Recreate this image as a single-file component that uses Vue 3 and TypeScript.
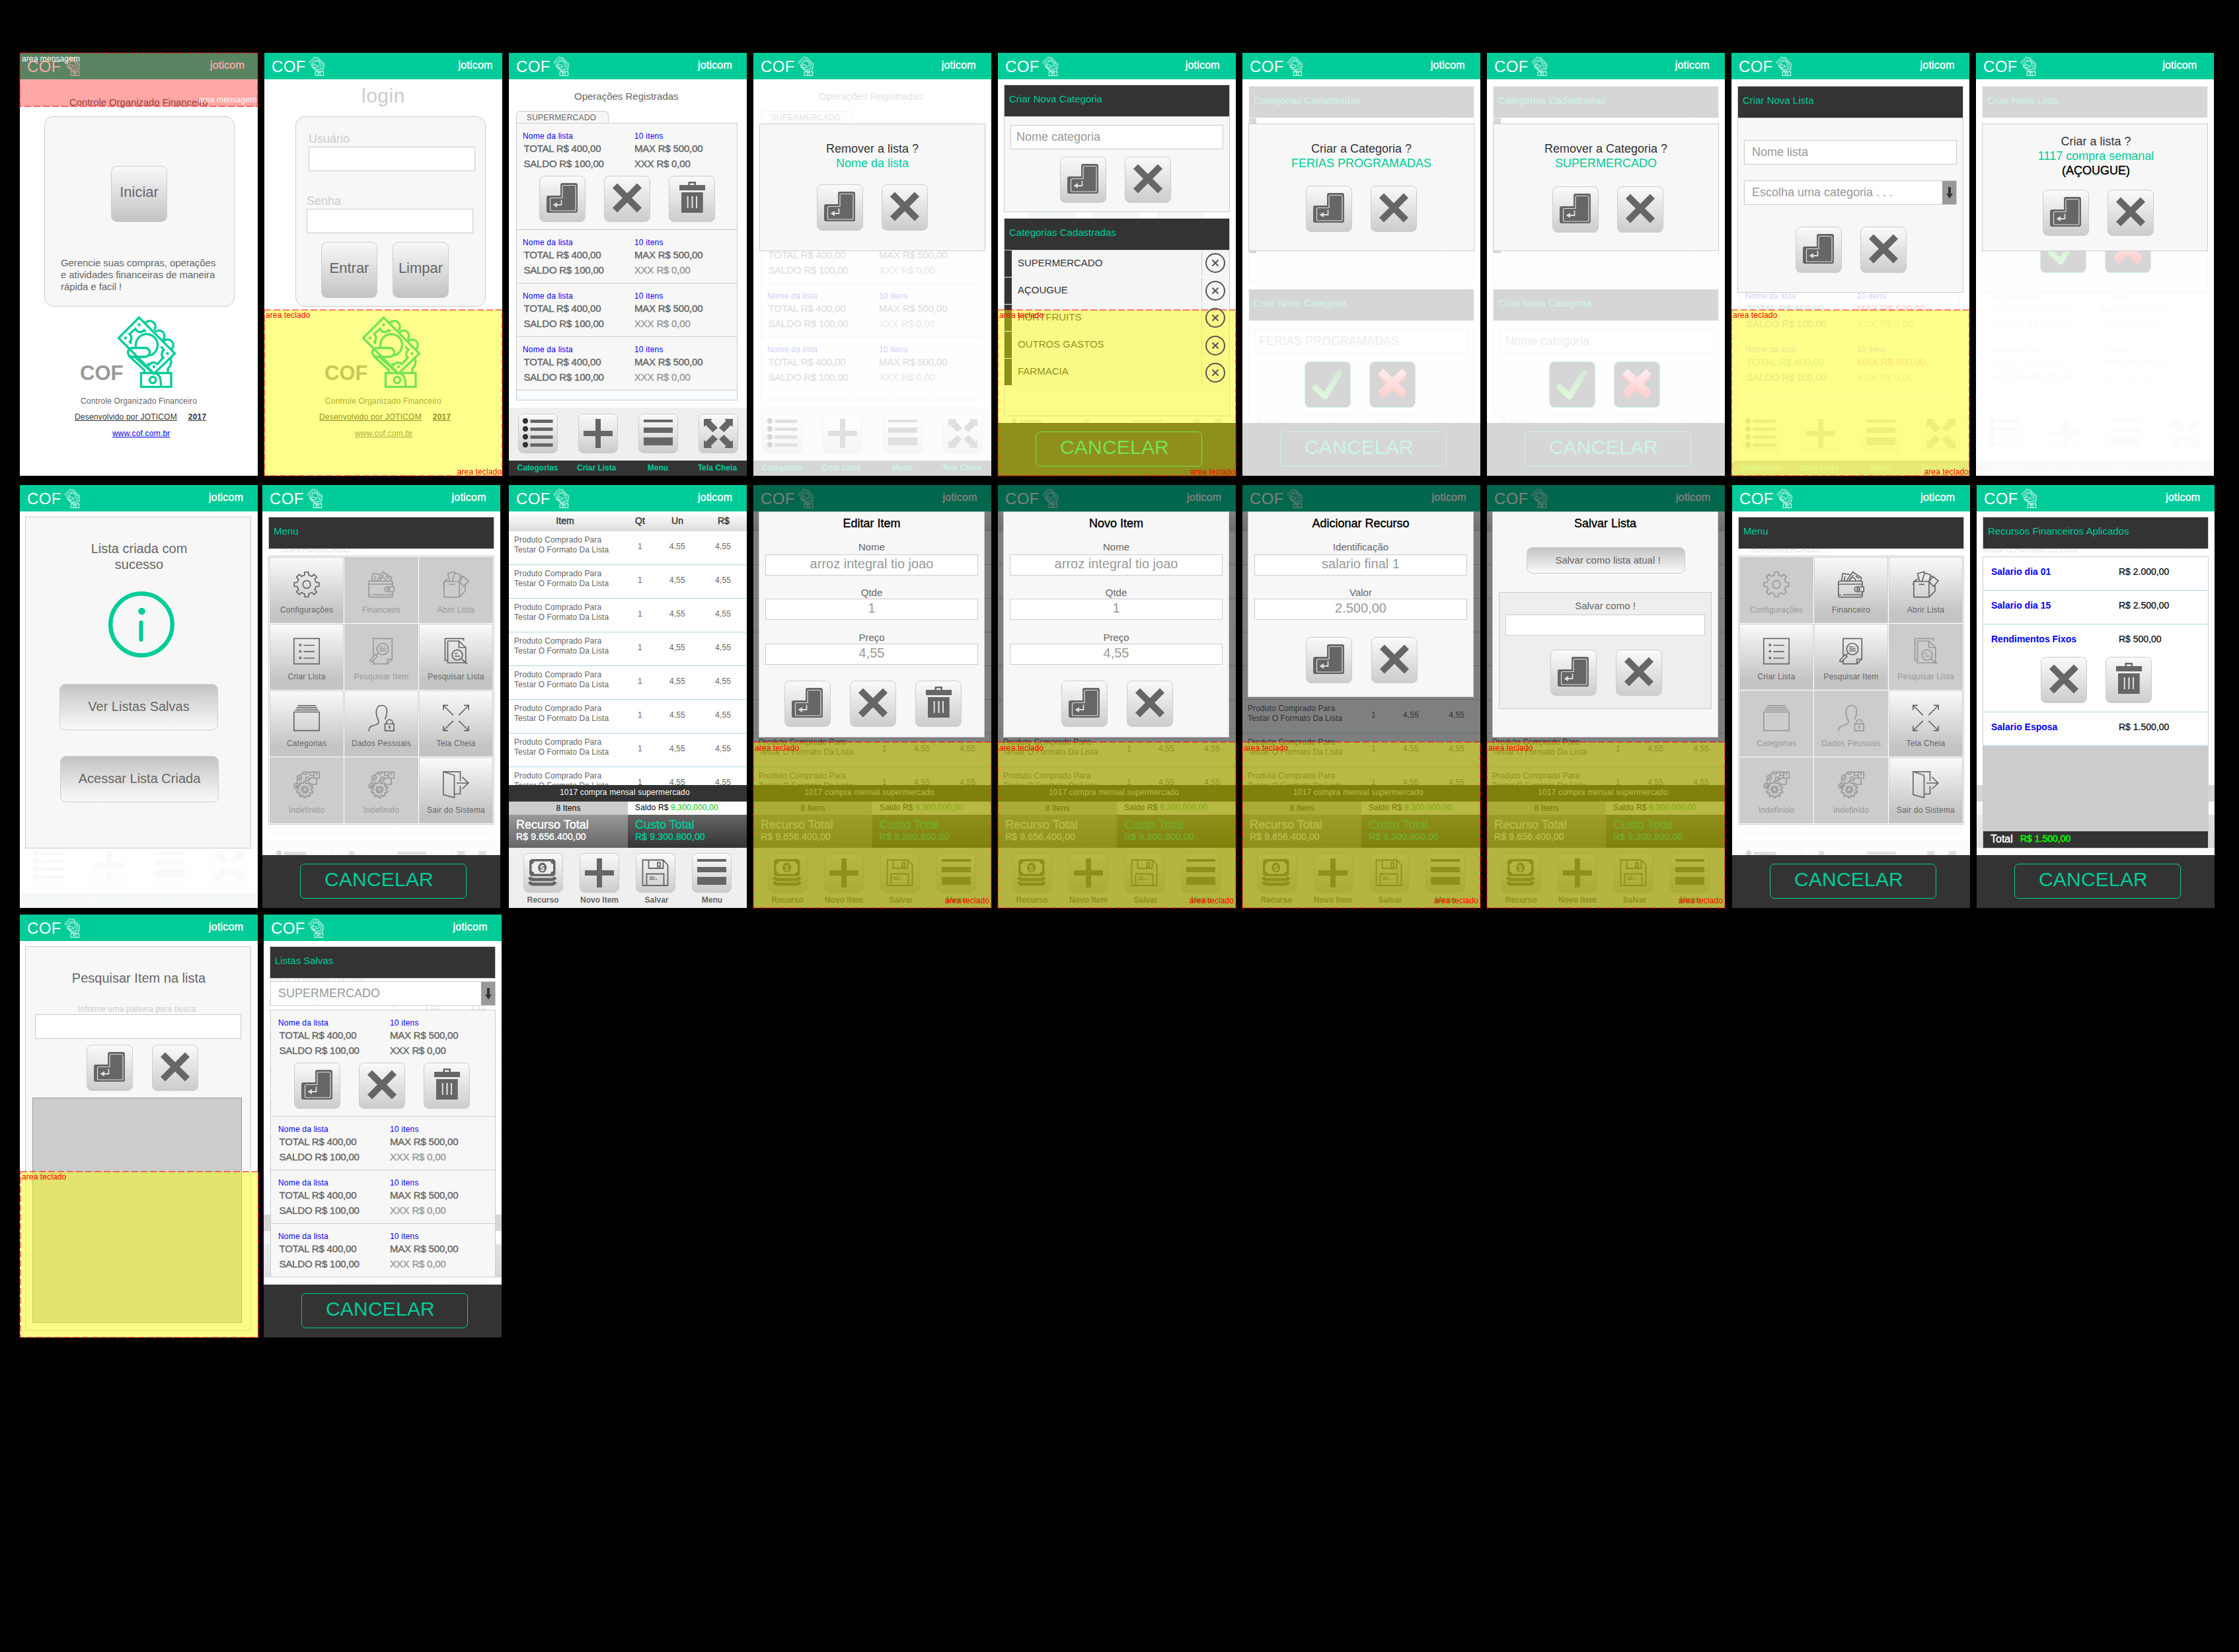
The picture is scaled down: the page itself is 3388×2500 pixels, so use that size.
<script setup lang="ts">
type Screen = {
  kind: string
  brand: number
  nudge?: number
  base?: 'ops' | 'items'
  old?: boolean
  veil?: 'v80' | 'v90' | 'v95' | 'dark'
  keys?: 'row1' | 'row2' | 'row3'
  title?: string
  fields?: { label: string; value: string }[]
  icons?: string[]
  ask?: { lines: { text: string; cls: string }[]; left: number; top: number }
  typed?: string
  cancel?: boolean
  on?: string[]
}

const rows: Screen[][] = [
  [
    { kind: 'intro', brand: 339 },
    { kind: 'login', brand: 344.6, keys: 'row1' },
    { kind: 'plain', brand: 337, base: 'ops' },
    {
      kind: 'ask', brand: 335.8, base: 'ops', veil: 'v80',
      ask: { left: 96, top: 199, lines: [{ text: 'Remover a lista ?', cls: '' }, { text: 'Nome da lista', cls: 'green' }] },
    },
    { kind: 'categories', brand: 334.8, base: 'ops', old: true, veil: 'v90', keys: 'row1', cancel: true },
    {
      kind: 'catAsk', brand: 335.8, base: 'ops', old: true, veil: 'v90', cancel: true, typed: 'FERIAS PROGRAMADAS',
      ask: { left: 96, top: 201, lines: [{ text: 'Criar a Categoria ?', cls: '' }, { text: 'FERIAS PROGRAMADAS', cls: 'green' }] },
    },
    {
      kind: 'catAsk', brand: 335.8, base: 'ops', old: true, veil: 'v90', cancel: true, typed: 'Nome categoria',
      ask: { left: 99, top: 202, lines: [{ text: 'Remover a Categoria ?', cls: '' }, { text: 'SUPERMERCADO', cls: 'green' }] },
    },
    { kind: 'newList', brand: 336.7, base: 'ops', old: true, veil: 'v80', keys: 'row1' },
    {
      kind: 'newListAsk', brand: 333.3, base: 'ops', old: true, veil: 'v90',
      ask: {
        left: 101, top: 207,
        lines: [{ text: 'Criar a lista ?', cls: '' }, { text: '1117 compra semanal', cls: 'green' }, { text: '(AÇOUGUE)', cls: 'black' }],
      },
    },
  ],
  [
    { kind: 'created', brand: 337.2, base: 'ops', veil: 'v95' },
    {
      kind: 'menu', brand: 337.7, nudge: -3, base: 'ops', veil: 'v80', cancel: true,
      on: ['Configurações', 'Criar Lista', 'Pesquisar Lista', 'Categorias', 'Dados Pessoais', 'Tela Cheia', 'Sair do Sistema'],
    },
    { kind: 'plain', brand: 337.2, base: 'items' },
    {
      kind: 'form', brand: 337.7, base: 'items', veil: 'dark', keys: 'row2', title: 'Editar Item',
      fields: [{ label: 'Nome', value: 'arroz integral tio joao' }, { label: 'Qtde', value: '1' }, { label: 'Preço', value: '4,55' }],
      icons: ['enter', 'cross', 'trash'],
    },
    {
      kind: 'form', brand: 337.2, base: 'items', veil: 'dark', keys: 'row2', title: 'Novo Item',
      fields: [{ label: 'Nome', value: 'arroz integral tio joao' }, { label: 'Qtde', value: '1' }, { label: 'Preço', value: '4,55' }],
      icons: ['enter', 'cross'],
    },
    {
      kind: 'form', brand: 337.7, base: 'items', veil: 'dark', keys: 'row2', title: 'Adicionar Recurso',
      fields: [{ label: 'Identificação', value: 'salario final 1' }, { label: 'Valor', value: '2.500,00' }],
      icons: ['enter', 'cross'],
    },
    { kind: 'saveList', brand: 337.2, base: 'items', veil: 'dark', keys: 'row2' },
    {
      kind: 'menu', brand: 336.3, nudge: 1, base: 'ops', veil: 'v80', cancel: true,
      on: ['Financeiro', 'Abrir Lista', 'Criar Lista', 'Pesquisar Item', 'Tela Cheia', 'Sair do Sistema'],
    },
    { kind: 'funds', brand: 337.3, nudge: 1, base: 'items', veil: 'v80', cancel: true },
  ],
  [
    { kind: 'search', brand: 337.2, base: 'ops', veil: 'v95', keys: 'row3' },
    { kind: 'saved', brand: 337.7, nudge: -1, base: 'items', veil: 'v80', cancel: true },
  ],
]

const menuItems = [
  { icon: 'gear', label: 'Configurações' },
  { icon: 'wallet', label: 'Financeiro' },
  { icon: 'box', label: 'Abrir Lista' },
  { icon: 'checklist', label: 'Criar Lista' },
  { icon: 'find-item', label: 'Pesquisar Item' },
  { icon: 'find-list', label: 'Pesquisar Lista' },
  { icon: 'folders', label: 'Categorias' },
  { icon: 'person', label: 'Dados Pessoais' },
  { icon: 'expand', label: 'Tela Cheia' },
  { icon: 'engine', label: 'Indefinido' },
  { icon: 'engine', label: 'Indefinido' },
  { icon: 'door', label: 'Sair do Sistema' },
]

const opsNav = [
  { icon: 'list60', label: 'Categorias' },
  { icon: 'plus60', label: 'Criar Lista' },
  { icon: 'bars60', label: 'Menu' },
  { icon: 'full60', label: 'Tela Cheia' },
]
const itemsNav = [
  { icon: 'money60', label: 'Recurso' },
  { icon: 'plus60', label: 'Novo Item' },
  { icon: 'disk60', label: 'Salvar' },
  { icon: 'bars60', label: 'Menu' },
]
const categories = ['SUPERMERCADO', 'AÇOUGUE', 'HORTFRUITS', 'OUTROS GASTOS', 'FARMACIA']

/* Outline of a cog wheel centred on cx, cy. */
function cog(cx: number, cy: number, teeth: number, outer: number, inner: number): string {
  const step = (Math.PI * 2) / teeth
  const at = (r: number, a: number) => `${(cx + r * Math.cos(a)).toFixed(2)} ${(cy + r * Math.sin(a)).toFixed(2)}`
  const pts: string[] = []
  for (let i = 0; i < teeth; i++) {
    const a = i * step - Math.PI / 2
    pts.push(at(inner, a - step * 0.27), at(outer, a - step * 0.2), at(outer, a + step * 0.2), at(inner, a + step * 0.27))
  }
  return 'M' + pts.join('L') + 'Z'
}
</script>

<template>
  <main class="board">
    <svg class="defs" width="0" height="0" aria-hidden="true">
      <linearGradient id="gGreen" x1="0" y1="0" x2="0" y2="1">
        <stop offset="0" stop-color="#2b9a2b" /><stop offset="1" stop-color="#5fd84f" />
      </linearGradient>
      <linearGradient id="gRed" x1="0" y1="0" x2="0" y2="1">
        <stop offset="0" stop-color="#ff9a9a" /><stop offset="1" stop-color="#f22" />
      </linearGradient>
      <symbol id="logo" viewBox="0 0 90 109">
        <g fill="none" stroke="currentColor" stroke-width="3.300" stroke-linejoin="miter">
          <path d="M33.500 2.500L2.500 33.500L56 87.500L87.500 57Z" />
          <path d="M43 10.500a7.500 7.500 0 0 1 13 11.500M58 24.500a7.500 7.500 0 0 1 11.500 11.500M71 38a7.500 7.500 0 0 1 11.500 12.500" />
          <path d="M44 24L41 21.500A7.500 7.500 0 0 1 28 19.500L19 27.500A8 8 0 0 1 19.500 39.500L22 42" />
          <path d="M46 72l2.500 2.500A8 8 0 0 1 61 73L70 63.500A8 8 0 0 1 71 51.500L66.500 46.500" />
          <path d="M28.500 48.500V44a16.500 16.500 0 1 1 21 16" />
          <rect x="16.500" y="48.500" width="33" height="13.500" rx="6.700" />
          <path d="M17.500 60L41.500 82V87M27 62L56 88M81 64c3 8 -1 13 -4 16v7" />
          <rect x="36.500" y="86.500" width="45.500" height="21" />
          <circle cx="54" cy="97" r="4.800" />
          <path d="M58 87c8 2 8.500 10 8.500 20" />
        </g>
        <g fill="currentColor">
          <circle cx="33.500" cy="13.500" r="2.200" /><circle cx="13" cy="33.500" r="2.200" />
          <circle cx="76.500" cy="57" r="2.200" /><circle cx="56" cy="77" r="2.200" />
        </g>
      </symbol>
      <symbol id="enter" viewBox="0 0 70 70">
        <path fill="#666" d="M35 11H55a3 3 0 0 1 3 3V53a3 3 0 0 1-3 3H14a3 3 0 0 1-3-3V33a3 3 0 0 1 3-3H32V14a3 3 0 0 1 3-3Z" />
        <path fill="none" stroke="#ddd" stroke-width="1.200" d="M37 14.500H53a2 2 0 0 1 2 2V51a2 2 0 0 1-2 2H18.500a2 2 0 0 1-2-2V35.500a2 2 0 0 1 2-2H35V16.500a2 2 0 0 1 2-2Z" />
        <path fill="none" stroke="#ddd" stroke-width="1.800" d="M33.500 36.500V44H23" />
        <path fill="#ddd" d="M20.500 44L27 40V48Z" />
      </symbol>
      <symbol id="cross" viewBox="0 0 70 70">
        <path stroke="#666" stroke-width="10" d="M16.500 15L53.500 52M53.500 15L16.500 52" />
      </symbol>
      <symbol id="trash" viewBox="0 0 70 70">
        <path fill="#666" fill-rule="evenodd" d="M16 14H29.500V9H41V14H55V22H16ZM32 11.500V14H38.500V11.500ZM19 25H51.700V56H19ZM27.700 31V49H29.700V31ZM34.400 31V49H36.600V31ZM41 31V49H43V31Z" />
      </symbol>
      <symbol id="check" viewBox="0 0 70 70">
        <path fill="none" stroke="url(#gGreen)" stroke-width="9" stroke-linecap="round" stroke-linejoin="round" d="M16 39L31 53L53 17" />
      </symbol>
      <symbol id="redx" viewBox="0 0 70 70">
        <path stroke="#d22" stroke-width="11" d="M17 53L53 20M17 20L53 53" />
        <path stroke="url(#gRed)" stroke-width="11" d="M17 49L53 15M17 15L53 49" />
      </symbol>
      <symbol id="list60" viewBox="0 0 60 60">
        <path fill="#333" d="M6.800 11a4.200 4.200 0 1 1 8.400 0a4.200 4.200 0 1 1-8.400 0M6.800 23a4.200 4.200 0 1 1 8.400 0a4.200 4.200 0 1 1-8.400 0M6.800 35a4.200 4.200 0 1 1 8.400 0a4.200 4.200 0 1 1-8.400 0M6.800 47a4.200 4.200 0 1 1 8.400 0a4.200 4.200 0 1 1-8.400 0" />
        <path stroke="#666" stroke-width="5" d="M18.500 11.500H52.500M18.500 23.500H52.500M18.500 35.500H52.500M18.500 47.500H52.500" />
      </symbol>
      <symbol id="plus60" viewBox="0 0 60 60">
        <path fill="#666" d="M26 8H34V26H52V34H34V52H26V34H8V26H26Z" />
      </symbol>
      <symbol id="bars60" viewBox="0 0 60 60">
        <path fill="#666" d="M8 9H52V13H8ZM8 21H52V29H8ZM8 36H52V48H8Z" />
      </symbol>
      <symbol id="full60" viewBox="0 0 60 60">
        <path fill="#666" d="M8 8H20.500L18.500 11L29 21.500L21.500 28L11 17.500L8 20ZM52 8H39.500L41.500 11L31 21.500L38.500 28L49 17.500L52 20ZM8 52H20.500L18.500 49L29 38.500L21.500 32L11 42.500L8 40ZM52 52H39.500L41.500 49L31 38.500L38.500 32L49 42.500L52 40Z" />
      </symbol>
      <symbol id="money60" viewBox="0 0 60 60">
        <path fill="#666" d="M12 9H45.500L48.500 12V32L45.500 35H12L9 32V12Z" />
        <path fill="#eee" d="M16.500 12.500H41A4.500 4.500 0 0 0 45 16.500V27.500A4.500 4.500 0 0 0 41 31.500H16.500A4.500 4.500 0 0 0 12.500 27.500V16.500A4.500 4.500 0 0 0 16.500 12.500Z" />
        <ellipse cx="28.700" cy="22" rx="6.500" ry="7.500" fill="#666" />
        <text x="28.700" y="26.500" text-anchor="middle" font-size="12" font-weight="700" fill="#eee">$</text>
        <path fill="none" stroke="#666" stroke-width="5" d="M9 36.500Q11 40 15 40H42.500Q46.500 40 48.500 36.500M9 43.500Q11 47 15 47H42.500Q46.500 47 48.500 43.500" />
      </symbol>
      <symbol id="disk60" viewBox="0 0 60 60">
        <path fill="none" stroke="#666" stroke-width="1.800" d="M10.500 10.500H41.500L48.500 18V49H10.500ZM19.500 10.500V23H41.500V10.500M33 14.500H37V20.500H33ZM16.500 49V31.500H42.500V49" />
        <path stroke="#666" stroke-width="1.500" d="M20.500 36.500H28.500M20.500 39.500H28.500M30 39.500H32" />
      </symbol>
      <symbol id="gear" viewBox="0 0 40 40">
        <path class="ln" stroke-linejoin="round" :d="cog(20, 20, 8, 19, 14.5)" /><circle class="ln" cx="20" cy="20" r="5.800" />
      </symbol>
      <symbol id="wallet" viewBox="0 0 40 40">
        <path class="ln" d="M2.500 14.800H35Q37 14.800 37 17V23.500M37 31V37Q37 39.200 35 39.200H3Q.8 39.200 .8 37V16.500Q.8 14.800 3 14.800M.8 19.500H37M.8 35.500H5M8 35.500H37M29 23.500H39.300V31H29A3.700 3.700 0 0 1 29 23.500Z" />
        <circle class="ln" cx="31" cy="27.200" r="2" />
        <path class="ln" d="M5.500 14.500L7.500 3.500L18 5M9.500 14L11 7.500M13 14.500L22.500 1L35.800 10L34 14.500M17 14.500L23.500 5.500M17.500 14.500A4.500 4.500 0 0 1 27 14.500M27 7L32 11" />
      </symbol>
      <symbol id="box" viewBox="0 0 40 40">
        <path class="ln" d="M2 15.500H25V39.200H2ZM25 39.200L34 30V20M2 15.500L.8 21M2 15.500L8 11.500M25 15.500L31 8L39 14.500L31.500 23ZM11 15.500L7.500 3.500L17.500 .8L19 4M14 15.500L18.500 2.500L27.500 5.500L25 15M27 7.500L31 8M9.500 19.800H18" />
      </symbol>
      <symbol id="checklist" viewBox="0 0 40 40">
        <rect class="ln" x=".8" y=".8" width="38.400" height="38.400" />
        <path class="ln" d="M15.500 11H32M15.500 20.700H32M15.500 30.500H32" />
        <path fill="currentColor" d="M10.300 7.800l.8 1.800 1.800.2-1.300 1.200.4 1.900-1.700-1-1.700 1 .4-1.900-1.300-1.200 1.800-.2zM10.300 17.500l.8 1.800 1.800.2-1.300 1.200.4 1.900-1.700-1-1.700 1 .4-1.900-1.300-1.200 1.800-.2zM10.300 27.300l.8 1.800 1.800.2-1.300 1.200.4 1.900-1.700-1-1.700 1 .4-1.900-1.300-1.200 1.800-.2z" />
      </symbol>
      <symbol id="find-item" viewBox="0 0 40 40">
        <path class="ln" d="M8 27V.8H36.300V32L29 39.200H8V33M29 39V32H36" />
        <circle class="ln" cx="22" cy="16.700" r="8.700" />
        <path class="ln" d="M17 13.500H22.500M24 13.500H25.500M17 16.500H27M17 19.500H27M15.500 23L12.500 26M11 25L3.500 33A1.600 1.600 0 0 0 6 35.500L14 27.800Z" />
      </symbol>
      <symbol id="find-list" viewBox="0 0 40 40">
        <path class="ln" d="M31.500 4V.8H3.500V34H7M24.500 4.500H7.500V37.500H34.800V14.500ZM24.500 4.500V14.500H34.800M28 31.500L37 39.500M18 23.500H22M18 27.500H26" />
        <circle class="ln" cx="22" cy="25.700" r="7.800" />
      </symbol>
      <symbol id="folders" viewBox="0 0 40 40">
        <path class="ln" d="M6.500 1.300H34M4.500 4.600H36M2.500 7.900H38M.8 11H39.200V39.200H.8Z" />
      </symbol>
      <symbol id="person" viewBox="0 0 40 40">
        <path class="ln" d="M1 40C1.500 34 3.500 32.500 8 31.500C14 30 16 28.500 16 26C16 22 12.300 20 12.300 12C12.300 5 15 1 20.500 1C26 1 28.500 5 28.500 10C28.500 15 27.500 18 25.500 22M25.500 29H39.200V39.300H25.500ZM27.500 29V27.500A4.900 4.900 0 0 1 37.300 27.500V29M32.400 33V36.500" />
        <circle fill="currentColor" cx="32.400" cy="33.200" r="1.500" />
      </symbol>
      <symbol id="expand" viewBox="0 0 40 40">
        <path class="ln" d="M.9 8V.9H8M1 1L15.800 15.800M32 .9H39.100V8M39 1L24.300 15.800M.9 32V39.100H8M1 39L15.800 24.300M32 39.100H39.100V32M39 39L24.300 24.300" />
      </symbol>
      <symbol id="engine" viewBox="0 0 40 40">
        <path class="ln" :d="cog(17.3, 27.3, 10, 12.5, 9.8)" />
        <circle class="ln" cx="17.300" cy="27.300" r="5.300" /><circle class="ln" cx="17.300" cy="27.300" r="3" />
        <circle class="ln" cx="4.700" cy="22" r="3.600" /><circle class="ln" cx="4.700" cy="22" r=".8" />
        <circle class="ln" cx="9" cy="9.500" r="3.600" /><circle class="ln" cx="9" cy="9.500" r=".8" />
        <circle class="ln" cx="21" cy="11" r="2.600" />
        <path class="ln" d="M10.500 5.500L15 .8H38Q39.300 .8 39.300 2.500V10H25M25 10V13M5 18L6.500 12M35 10V19.500H26M14 1L16 4.500H19L21 1M25 1V6H31V1M31 6V10M35 1V6" />
      </symbol>
      <symbol id="door" viewBox="0 0 40 41">
        <path class="ln" d="M.8 .8H26.500V15M26.500 22.500V34.500H18M.8 .8L17.500 6.300V40.200L.8 35.500ZM21 18H38.500M29.500 8.800L38.800 18L29.500 27" />
      </symbol>
      <symbol id="down" viewBox="0 0 10 18">
        <path fill="#333" d="M3 0H7V10H10L5 17.500L0 10H3Z" />
      </symbol>
    </svg>

    <div v-for="(row, r) in rows" :key="r" class="row" :class="'row-' + r">
      <section v-for="(s, i) in row" :key="i" class="phone" :style="{ marginLeft: (s.nudge ?? 0) + 'px', marginRight: -(s.nudge ?? 0) + 'px' }">
        <header class="top">
          <span class="top-name">COF</span>
          <svg class="top-logo" preserveAspectRatio="none"><use href="#logo" /></svg>
          <span class="top-brand" :style="{ marginRight: 359 - s.brand + 'px' }">joticom</span>
        </header>

        <div class="stage">
          <!-- registered operations -->
          <div v-if="s.base === 'ops'" class="ops" :class="{ old: s.old }">
            <div class="ops-main">
              <h2 class="ops-title">Operações Registradas</h2>
              <div class="ops-tab">SUPERMERCADO</div>
              <div class="ops-box">
                <div v-for="n in 4" :key="n" class="op" :class="{ open: n === 1 }">
                  <div class="op-line name"><span>Nome da lista</span><span>10 itens</span></div>
                  <div class="op-line sum a"><span>TOTAL R$ 400,00</span><span>MAX R$ 500,00</span></div>
                  <div class="op-line sum b"><span>SALDO R$ 100,00</span><span>XXX R$ 0,00</span></div>
                  <div v-if="n === 1" class="op-btns">
                    <span v-for="(ic, k) in s.old ? ['check', 'redx', 'redx'] : ['enter', 'cross', 'trash']" :key="k" class="btn"><svg><use :href="'#' + ic" /></svg></span>
                  </div>
                </div>
              </div>
            </div>
            <nav class="ops-nav">
              <span v-for="n in opsNav" :key="n.label" class="btn small"><svg><use :href="'#' + n.icon" /></svg></span>
            </nav>
            <div class="ops-labels"><span v-for="n in opsNav" :key="n.label">{{ n.label }}</span></div>
          </div>

          <!-- shopping list items -->
          <div v-if="s.base === 'items'" class="items">
            <div class="item head"><span>Item</span><span>Qt</span><span>Un</span><span>R$</span></div>
            <div class="items-body">
              <div v-for="n in 8" :key="n" class="item">
                <span class="prod">Produto Comprado Para<br />Testar O Formato Da Lista</span><span>1</span><span>4,55</span><span>4,55</span>
              </div>
            </div>
            <div class="items-name">1017 compra mensal supermercado</div>
            <div class="items-count"><span>8 Itens</span><span>Saldo R$ <b>9.300.000,00</b></span></div>
            <div class="items-total">
              <div><strong>Recurso Total</strong><em>R$ 9.656.400,00</em></div>
              <div><strong>Custo Total</strong><em>R$ 9.300.800,00</em></div>
            </div>
            <nav class="items-nav">
              <span v-for="n in itemsNav" :key="n.label" class="btn small"><svg><use :href="'#' + n.icon" /></svg></span>
            </nav>
            <div class="items-labels"><span v-for="n in itemsNav" :key="n.label">{{ n.label }}</span></div>
          </div>

          <div v-if="s.veil && s.veil !== 'dark'" class="veil" :class="s.veil"></div>

          <div v-if="s.kind === 'intro'" class="intro">
            <h2>Controle Organizado Financeiro</h2>
            <div class="intro-card">
              <span class="big-btn">Iniciar</span>
              <p>Gerencie suas compras, operações<br />e atividades financeiras de maneira<br />rápida e facil !</p>
            </div>
          </div>

          <div v-if="s.kind === 'login'" class="login">
            <h2>login</h2>
            <div class="login-card">
              <label class="user">Usuário</label><div class="field user"></div>
              <label class="pass">Senha</label><div class="field pass"></div>
              <div class="login-btns"><span class="big-btn">Entrar</span><span class="big-btn">Limpar</span></div>
            </div>
          </div>

          <footer v-if="s.kind === 'intro' || s.kind === 'login'" class="credits" :class="s.kind + '-credits'">
            <div class="credits-mark"><b>COF</b><svg><use href="#logo" /></svg></div>
            <p>Controle Organizado Financeiro</p>
            <p class="dev"><u>Desenvolvido por JOTICOM</u><u class="year">2017</u></p>
            <a>www.cof.com.br</a>
          </footer>

          <template v-if="s.kind === 'categories'">
            <div class="panel cat-new">
              <div class="panel-head">Criar Nova Categoria</div>
              <div class="field ph">Nome categoria</div>
              <div class="pair"><span class="btn"><svg><use href="#enter" /></svg></span><span class="btn"><svg><use href="#cross" /></svg></span></div>
            </div>
            <div class="panel cat-list">
              <div class="panel-head">Categorias Cadastradas</div>
              <div v-for="c in categories" :key="c" class="cat"><span>{{ c }}</span></div>
            </div>
          </template>

          <template v-if="s.kind === 'catAsk'">
            <div class="panel cat-a">
              <div class="panel-head">Categorias Cadastradas</div>
              <div v-for="c in categories" :key="c" class="cat bare"><span></span><svg class="cat-x"><use href="#redx" /></svg></div>
            </div>
            <div class="panel cat-b">
              <div class="panel-head">Criar Nova Categoria</div>
              <div class="field ph" :class="{ caps: s.typed !== 'Nome categoria' }">{{ s.typed }}</div>
              <div class="pair"><span class="btn ink"><svg><use href="#check" /></svg></span><span class="btn ink"><svg><use href="#redx" /></svg></span></div>
            </div>
          </template>

          <div v-if="s.kind === 'newList' || s.kind === 'newListAsk'" class="panel new-list">
            <div class="panel-head">Criar Nova Lista</div>
            <div class="field ph">Nome lista</div>
            <div class="field ph pick"><span>Escolha uma categoria . . .</span><i><svg><use href="#down" /></svg></i></div>
            <div class="pair">
              <span v-for="ic in s.kind === 'newList' ? ['enter', 'cross'] : ['check', 'redx']" :key="ic" class="btn" :class="{ ink: s.kind !== 'newList' }"><svg><use :href="'#' + ic" /></svg></span>
            </div>
          </div>

          <div v-if="s.kind === 'created'" class="panel created">
            <h2>Lista criada com<br />sucesso</h2>
            <svg class="info" viewBox="0 0 100 100">
              <circle cx="50" cy="50" r="46.800" fill="none" stroke="#0c9" stroke-width="6.400" />
              <circle cx="50.500" cy="30" r="5.300" fill="#0c9" />
              <path d="M49.500 47V73" stroke="#0c9" stroke-width="6" stroke-linecap="round" />
            </svg>
            <span class="wide-btn one">Ver Listas Salvas</span>
            <span class="wide-btn two">Acessar Lista Criada</span>
          </div>

          <template v-if="s.kind === 'menu'">
            <div class="panel title-only"><div class="panel-head">Menu</div></div>
            <div class="menu">
              <div v-for="(m, k) in menuItems" :key="k" class="cell" :class="{ on: s.on?.includes(m.label) }">
                <svg><use :href="'#' + m.icon" /></svg><span>{{ m.label }}</span>
              </div>
            </div>
          </template>

          <template v-if="s.kind === 'funds'">
            <div class="panel title-only"><div class="panel-head">Recursos Financeiros Aplicados</div></div>
            <div class="panel funds">
              <div class="fund"><b>Salario dia 01</b><span>R$ 2.000,00</span></div>
              <div class="fund"><b>Salario dia 15</b><span>R$ 2.500,00</span></div>
              <div class="fund open">
                <b>Rendimentos Fixos</b><span>R$ 500,00</span>
                <div class="pair"><span class="btn"><svg><use href="#cross" /></svg></span><span class="btn"><svg><use href="#trash" /></svg></span></div>
              </div>
              <div class="fund"><b>Salario Esposa</b><span>R$ 1.500,00</span></div>
              <div class="fund-gap"></div>
              <div class="fund-total"><span>Total</span><b>R$ 1.500,00</b></div>
            </div>
          </template>

          <div v-if="s.kind === 'search'" class="panel search">
            <h2>Pesquisar Item na lista</h2>
            <p>Informe uma palavra para busca</p>
            <div class="field"></div>
            <div class="pair"><span class="btn"><svg><use href="#enter" /></svg></span><span class="btn"><svg><use href="#cross" /></svg></span></div>
            <div class="results"></div>
          </div>

          <template v-if="s.kind === 'saved'">
            <div class="panel title-only"><div class="panel-head">Listas Salvas</div></div>
            <div class="field ph pick saved-pick"><span>SUPERMERCADO</span><i><svg><use href="#down" /></svg></i></div>
            <div class="saved-box">
              <div v-for="n in 4" :key="n" class="op" :class="{ open: n === 1 }">
                <div class="op-line name"><span>Nome da lista</span><span>10 itens</span></div>
                <div class="op-line sum a"><span>TOTAL R$ 400,00</span><span>MAX R$ 500,00</span></div>
                <div class="op-line sum b"><span>SALDO R$ 100,00</span><span>XXX R$ 0,00</span></div>
                <div v-if="n === 1" class="op-btns">
                  <span v-for="ic in ['enter', 'cross', 'trash']" :key="ic" class="btn"><svg><use :href="'#' + ic" /></svg></span>
                </div>
              </div>
            </div>
          </template>

          <div v-if="s.cancel" class="cancel"><span>CANCELAR</span></div>

          <div v-if="s.ask && s.kind !== 'ask'" class="veil v80"></div>
          <div v-if="s.ask" class="ask" :class="{ tall: s.ask.lines.length > 2 }">
            <p v-for="l in s.ask.lines" :key="l.text" :class="l.cls">{{ l.text }}</p>
            <div class="ask-btns" :style="{ left: s.ask.left - 10 + 'px', top: s.ask.top - 108 + 'px' }">
              <span class="btn"><svg><use href="#enter" /></svg></span><span class="btn"><svg><use href="#cross" /></svg></span>
            </div>
          </div>
        </div>

        <div v-if="s.veil === 'dark'" class="shade"></div>

        <div v-if="s.kind === 'form'" class="form" :class="{ short: s.fields?.length === 2 }">
          <h2>{{ s.title }}</h2>
          <div v-for="f in s.fields" :key="f.label" class="form-row"><label>{{ f.label }}</label><div class="field">{{ f.value }}</div></div>
          <div class="form-btns"><span v-for="ic in s.icons" :key="ic" class="btn"><svg><use :href="'#' + ic" /></svg></span></div>
        </div>
        <div v-if="s.kind === 'saveList'" class="form save">
          <h2>Salvar Lista</h2>
          <span class="wide-btn">Salvar como lista atual !</span>
          <div class="save-box">
            <label>Salvar como !</label><div class="field"></div>
            <div class="form-btns"><span class="btn"><svg><use href="#enter" /></svg></span><span class="btn"><svg><use href="#cross" /></svg></span></div>
          </div>
        </div>

        <div v-if="s.kind === 'intro'" class="area msg">
          <svg><rect width="360" height="81" /></svg>
          <span class="first">area mensagem</span><span class="last">area mensagem</span>
        </div>
        <div v-if="s.keys" class="area keys" :class="s.keys">
          <svg><rect width="360" height="251" /></svg>
          <span class="first">area teclado</span><span v-if="s.keys !== 'row3'" class="last">area teclado</span>
        </div>
        <div v-if="s.kind === 'categories'" class="rounds">
          <svg v-for="c in categories" :key="c" viewBox="0 0 30 30"><circle cx="15" cy="15" r="14" /><path d="M10.500 10.500L19.500 19.500M19.500 10.500L10.500 19.500" /></svg>
        </div>
      </section>
    </div>
  </main>
</template>

<style>
html,
body {
  background: #000;
}
</style>

<style scoped>
* {
  box-sizing: border-box;
}
h2,
p {
  margin: 0;
  font-weight: 400;
}
em,
i {
  font-style: normal;
}
.board {
  width: 3388px;
  height: 2500px;
  padding: 80px 30px 0;
  background: #000;
  color: #666;
  font-family: 'Liberation Sans', Arial, sans-serif;
  font-size: 15px;
  overflow: hidden;
}
.defs {
  position: absolute;
}
.ln {
  fill: none;
  stroke: currentColor;
  stroke-width: 1.7;
}
.row {
  display: flex;
  gap: 10px;
  height: 640px;
  margin-bottom: 14px;
}
.row-1 {
  margin-bottom: 10px;
}
.phone {
  position: relative;
  flex: none;
  display: flex;
  flex-direction: column;
  width: 360px;
  height: 640px;
  background: #fff;
  white-space: nowrap;
}
.top {
  display: flex;
  flex: none;
  height: 40px;
  background: #00cc99;
  color: #fff;
}
.top-name {
  margin-left: 11px;
  width: 56px;
  font-size: 24px;
  letter-spacing: 0.4px;
  line-height: 42px;
}
.top-logo {
  width: 25px;
  height: 30px;
  margin-top: 5px;
}
.top-brand {
  margin-left: auto;
  font-size: 16px;
  letter-spacing: 0.2px;
  line-height: 37px;
  -webkit-text-stroke: 0.4px currentColor;
}
.stage {
  position: relative;
  flex: none;
  height: 600px;
  overflow: hidden;
}
.btn {
  flex: none;
  width: 70px;
  height: 70px;
  border: 1px solid #ccc;
  border-radius: 8px;
  background: linear-gradient(#fafafa, #ccc);
}
.btn svg {
  display: block;
  width: 70px;
  height: 70px;
  margin: -1px;
}
.btn.small {
  width: 60px;
  height: 60px;
}
.btn.small svg {
  width: 60px;
  height: 60px;
}
.btn.ink,
.old .op-btns .btn {
  background: #333;
  border-color: #00cc99;
}
.old .op-btns .btn {
  background: #bcd;
}
.field {
  height: 37px;
  border: 1px solid #ccc;
  background: #fff;
}
.ph {
  color: #999;
  font-size: 18px;
  line-height: 35px;
}
.veil,
.shade {
  position: absolute;
  inset: 0;
}
.v80 {
  background: rgba(255, 255, 255, 0.8);
}
.v90 {
  background: rgba(255, 255, 255, 0.85);
}
.v95 {
  background: rgba(255, 255, 255, 0.96);
}
.shade {
  background: rgba(0, 0, 0, 0.5);
}

/* operations */
.ops-main {
  height: 497px;
  padding: 16px 0 0 11px;
}
.ops-title {
  height: 32px;
  padding-left: 88px;
  font-size: 15px;
  line-height: 20px;
}
.ops-tab {
  width: 140px;
  height: 18px;
  padding-left: 15px;
  border: 1px solid #ccc;
  border-bottom: 0;
  border-radius: 6px 6px 0 0;
  background: #f7f7f7;
  font-size: 12px;
  letter-spacing: 0.2px;
  line-height: 18px;
}
.ops-box {
  width: 335px;
  height: 420px;
  border: 1px solid #ccc;
  background: linear-gradient(#fff 96%, #f3f9ff);
}
.op {
  height: 81px;
  padding: 11px 0 0 9px;
  border-bottom: 1px solid #ccc;
  background: #f7f7f7;
}
.op.open {
  height: 161px;
}
.op-line {
  display: grid;
  grid-template-columns: 169px 1fr;
}
.op-line.name {
  color: #00f;
  font-size: 12px;
  letter-spacing: 0.2px;
  line-height: 16px;
}
.op-line.sum {
  margin-top: 1px;
  line-height: 20px;
  letter-spacing: -0.2px;
  -webkit-text-stroke: 0.4px currentColor;
}
.op-line.sum span:first-child {
  margin-left: 1.5px;
}
.op-line.b {
  margin-top: 3px;
}
.op:not(.open) .b span:last-child {
  color: #999;
}
.old .a span:first-child {
  color: #396;
}
.old .a span:last-child {
  color: #f33;
}
.old .b span:first-child {
  color: #447;
}
.old .b span:last-child {
  color: #bbb;
}
.op-btns {
  display: flex;
  gap: 28px;
  margin: 8px 0 0 25px;
}
.ops-nav {
  display: flex;
  gap: 31px;
  height: 80px;
  padding: 9px 0 0 14px;
  background: #efefef;
}
.ops-labels {
  display: grid;
  grid-template-columns: 87px 91.5px 94px 86px;
  height: 23px;
  background: #333;
  color: #00cc99;
  font-size: 12px;
  font-weight: 700;
  line-height: 22px;
  text-align: center;
}

/* items */
.item {
  display: grid;
  grid-template-columns: 154px 73px 40px 66px;
  height: 51px;
  padding: 6px 0 0 8px;
  border-bottom: 1px solid #add8e6;
  font-size: 12px;
  line-height: 15px;
  letter-spacing: 0.1px;
}
.item > span:not(.prod) {
  text-align: center;
  padding-top: 10px;
}
.item > span:nth-child(4) {
  text-align: right;
  padding-right: 5px;
}
.item.head {
  height: 30px;
  border: 0;
  padding-top: 0;
  background: linear-gradient(#fff, #ddd);
  color: #333;
  font-size: 14px;
  line-height: 28px;
  -webkit-text-stroke: 0.4px currentColor;
}
.item.head > span:not(.prod) {
  padding-top: 0;
}
.item.head > span:nth-child(4) {
  padding-right: 7px;
}
.items-body {
  height: 384px;
  overflow: hidden;
}
.items-name {
  height: 25px;
  padding-left: 77px;
  background: #333;
  color: #fff;
  font-size: 12px;
  letter-spacing: 0.15px;
  line-height: 22px;
}
.items-count {
  display: grid;
  grid-template-columns: 180px 180px;
  height: 20px;
  color: #000;
  font-size: 12px;
  letter-spacing: 0.15px;
  line-height: 20px;
}
.items-count span:first-child {
  background: #ccc;
  text-align: center;
}
.items-count span:last-child {
  padding-left: 11px;
  line-height: 19px;
}
.items-count b {
  color: #0c0;
  font-weight: 400;
}
.items-total {
  display: grid;
  grid-template-columns: 180px 180px;
  height: 50px;
  color: #fff;
}
.items-total div {
  padding: 4px 0 0 11px;
  background: linear-gradient(#999, #666);
}
.items-total div + div {
  background: linear-gradient(#666, #333);
  color: #00cc99;
}
.items-total strong,
.items-total em {
  display: block;
  font-size: 18px;
  font-weight: 400;
  line-height: 22px;
  -webkit-text-stroke: 0.4px currentColor;
}
.items-total em {
  font-size: 14px;
  letter-spacing: 0.15px;
  line-height: 14px;
}
.items-nav {
  display: flex;
  gap: 25px;
  height: 68px;
  padding: 8px 0 0 22px;
  background: #efefef;
}
.items-labels {
  display: grid;
  grid-template-columns: 103px 68px 105px 63px;
  height: 23px;
  padding-bottom: 2px;
  background: #efefef;
  font-size: 12px;
  font-weight: 700;
  line-height: 22px;
  text-align: center;
}

/* intro and login */
.intro h2 {
  height: 56px;
  padding: 25px 0 0 75px;
  font-size: 15px;
  letter-spacing: -0.1px;
  line-height: 20px;
}
.intro-card,
.login-card {
  width: 288px;
  height: 288px;
  margin-left: 37px;
  padding: 74px 0 0 24px;
  border: 1px solid #ccc;
  border-radius: 14px;
  background: #f7f7f7;
}
.big-btn {
  display: block;
  width: 85px;
  height: 85px;
  border: 1px solid #ccc;
  border-radius: 9px;
  background: linear-gradient(#f8f8f8, #c3c3c3);
  color: #666;
  font-size: 22px;
  line-height: 78px;
  text-align: center;
}
.intro .big-btn {
  margin-left: 76px;
}
.intro p {
  margin-top: 53px;
  letter-spacing: -0.08px;
  line-height: 18px;
}
.login h2 {
  height: 56px;
  padding: 3px 0 0 147px;
  color: #ccc;
  font-size: 30px;
  letter-spacing: 0.5px;
  line-height: 43px;
}
.login-card {
  margin-left: 47px;
  padding: 27px 0 0 16px;
}
.login-card label {
  display: block;
  height: 18px;
  color: #ccc;
  font-size: 18px;
  line-height: 12px;
}
.login-card label.user {
  margin-left: 3px;
}
.login-card .field {
  width: 252px;
}
.login-card .field.user {
  margin-left: 3px;
}
.login-card label.pass {
  margin-top: 39px;
}
.login-btns {
  display: flex;
  gap: 23px;
  margin: 13px 0 0 22px;
}
.credits-mark {
  display: flex;
  height: 110px;
  margin: 14px 0 0 91px;
  color: #999;
}
.credits-mark b {
  width: 55.5px;
  padding-top: 67px;
  font-size: 31px;
  line-height: 40px;
}
.credits-mark svg {
  width: 90px;
  height: 109px;
  color: #00cc99;
}
.credits p {
  margin: 7px 0 0 92px;
  font-size: 12px;
  letter-spacing: 0.2px;
  line-height: 24px;
}
.credits p.dev {
  margin: 0 0 0 83px;
  color: #333;
}
.credits u.year {
  margin-left: 17px;
  font-weight: 700;
}
.credits a {
  display: block;
  margin-left: 140px;
  color: #00f;
  font-size: 12px;
  letter-spacing: 0.2px;
  line-height: 26px;
  text-decoration: underline;
}
.login-credits a {
  margin-left: 137px;
  color: #667;
}

/* panels */
.panel {
  position: absolute;
  left: 9px;
  width: 342px;
  border: 1px solid #ccc;
  background: #f7f7f7;
}
.panel-head {
  height: 48px;
  padding-left: 7px;
  border-bottom: 1px solid #ccc;
  background: #333;
  color: #00cc99;
  line-height: 42px;
}
.panel .field {
  width: 322px;
  margin-left: 9px;
}
.pair {
  display: flex;
  gap: 28px;
}
.cat-new {
  top: 8px;
  height: 193px;
}
.cat-new .field {
  margin-top: 12px;
  padding-left: 8px;
}
.cat-new .pair {
  margin: 11px 0 0 84px;
}
.cat-list {
  top: 210px;
  height: 300px;
}
.cat {
  display: flex;
  height: 40px;
  margin-bottom: 1px;
  border-left: 11px solid #333;
  background: #f5f5f5;
  color: #333;
}
.cat span {
  width: 288px;
  height: 37px;
  margin-top: 1px;
  padding-left: 9px;
  border-right: 1px solid #ccc;
  line-height: 36px;
}
.cat-a {
  top: 10px;
  height: 299px;
}
.cat.bare {
  background: #fff;
}
.cat-x {
  width: 36px;
  height: 36px;
  margin: 0 0 0 4px;
}
.cat-b {
  top: 317px;
  height: 193px;
}
.cat-b .field {
  margin-top: 12px;
  padding-left: 8px;
}
.cat-b .field.caps {
  padding-left: 5px;
}
.cat-b .pair {
  margin: 12px 0 0 84px;
}
.new-list {
  top: 10px;
  height: 313px;
}
.new-list .field {
  margin-top: 33px;
  padding-left: 11px;
}
.pick {
  display: flex;
  justify-content: space-between;
}
.new-list .pick {
  margin-top: 24px;
}
.pick i {
  width: 21px;
  padding: 9px 0 0 6px;
  background: #999;
}
.pick svg {
  display: block;
  width: 10px;
  height: 18px;
}
.new-list .pair {
  margin: 33px 0 0 87px;
}
.rounds {
  position: absolute;
  left: 314px;
  top: 303px;
  display: flex;
  flex-direction: column;
  gap: 11.5px;
}
.rounds svg {
  width: 30px;
  height: 30px;
  fill: none;
  stroke: #555;
  stroke-width: 2;
}
.created {
  left: 8px;
  top: 8px;
  height: 502px;
}
.created h2 {
  padding: 35px 0 0 3px;
  font-size: 20px;
  line-height: 24px;
  text-align: center;
}
.info {
  display: block;
  width: 100px;
  height: 100px;
  margin: 29px 0 0 125px;
}
.wide-btn {
  display: block;
  width: 240px;
  height: 70px;
  margin: 40px 0 0 51px;
  border: 1px solid #ccc;
  border-radius: 9px;
  background: linear-gradient(#c4c4c4, #fafafa);
  font-size: 20px;
  line-height: 67px;
  text-align: center;
}
.wide-btn.two {
  margin: 39px 0 0 52px;
}
.title-only {
  top: 8px;
  height: 49px;
}
.title-only .panel-head {
  height: 47px;
  border: 0;
}
.menu {
  position: absolute;
  left: 9px;
  top: 67px;
  display: grid;
  grid-template-columns: repeat(3, 112px);
  grid-auto-rows: 100px;
  gap: 1px;
  padding: 1px;
  border: 1px solid #ccc;
  background: #fff;
}
.cell {
  display: flex;
  flex-direction: column;
  align-items: center;
  background: #ccc;
  color: #999;
  font-size: 12px;
  letter-spacing: 0.22px;
  line-height: 20px;
}
.cell.on {
  border: 1px solid #ccc;
  background: linear-gradient(#fafafa, #c4c4c4 85%);
  color: #666;
}
.cell svg {
  width: 40px;
  height: 41px;
  margin: 21px 0 8px;
  flex: none;
}
.cell.on svg {
  margin-top: 20px;
}
.cancel {
  position: absolute;
  left: 0;
  right: 0;
  bottom: 0;
  height: 80px;
  padding: 13px 0 0 57px;
  background: #333;
}
.cancel span {
  display: block;
  width: 252px;
  height: 53px;
  padding-left: 36px;
  border: 1px solid #00cc99;
  border-radius: 7px;
  color: #00cc99;
  font-size: 30px;
  letter-spacing: 0.2px;
  line-height: 45px;
}
.funds {
  top: 68px;
  height: 442px;
  background: #fff;
}
.fund {
  display: grid;
  grid-template-columns: 193px 1fr;
  height: 51px;
  padding: 11px 0 0 12px;
  border-bottom: 1px solid #add8e6;
  color: #000;
  font-size: 14px;
  line-height: 22px;
}
.fund > span {
  -webkit-text-stroke: 0.2px currentColor;
}
.fund b {
  color: #00f;
}
.fund.open {
  height: 133px;
  grid-template-rows: 22px 1fr;
}
.fund .pair {
  margin: 16px 0 0 75px;
}
.fund-gap {
  height: 129px;
  background: #ccc;
}
.fund-total {
  display: flex;
  gap: 9px;
  height: 25px;
  padding-left: 11px;
  background: #333;
  color: #fff;
  font-size: 14px;
  line-height: 23px;
}
.fund-total span {
  width: 36px;
  font-size: 16px;
  -webkit-text-stroke: 0.4px currentColor;
}
.fund-total b {
  color: #0f0;
  font-weight: 400;
  -webkit-text-stroke: 0.5px currentColor;
}
.search {
  left: 8px;
  top: 8px;
  height: 582px;
}
.search h2 {
  padding: 35px 0 0 2px;
  font-size: 20px;
  line-height: 24px;
  text-align: center;
}
.search p {
  height: 43px;
  padding: 23px 0 0 79px;
  color: #ccc;
  font-size: 12px;
  letter-spacing: 0.2px;
  line-height: 24px;
}
.search .field {
  width: 312px;
  margin-left: 14px;
}
.search .pair {
  gap: 29px;
  margin: 9px 0 0 92px;
}
.results {
  width: 317px;
  height: 341px;
  margin: 10px 0 0 10px;
  border: 1px solid #999;
  background: #ccc;
}
.saved-pick {
  position: absolute;
  left: 10px;
  top: 61px;
  width: 341px;
  padding-left: 11px;
}
.saved-box {
  position: absolute;
  left: 10px;
  top: 104px;
  width: 341px;
  border: 1px solid #ccc;
  border-bottom: 0;
}
.saved-box .op {
  padding-left: 11px;
}
.saved-box .op-btns {
  margin-left: 24px;
}

/* confirmation */
.ask {
  position: absolute;
  left: 9px;
  top: 67px;
  width: 342px;
  height: 193px;
  padding-top: 26px;
  border: 1px solid #ccc;
  background: #f7f7f7;
  color: #333;
  font-size: 18px;
  line-height: 22px;
  text-align: center;
}
.ask.tall {
  padding-top: 15px;
  text-indent: 3px;
}
.ask .green {
  color: #00cc99;
}
.ask .black {
  color: #000;
  -webkit-text-stroke: 0.4px currentColor;
}
.ask-btns {
  position: absolute;
  display: flex;
  gap: 28px;
}

/* forms over the item list */
.form {
  position: absolute;
  left: 8px;
  top: 40px;
  width: 342px;
  height: 342px;
  padding: 7px 9px 0;
  border: 1px solid #ccc;
  background: #f7f7f7;
  text-align: center;
}
.form.short {
  height: 281px;
}
.form h2 {
  margin-bottom: 17px;
  color: #000;
  font-size: 18px;
  line-height: 20px;
  -webkit-text-stroke: 0.4px currentColor;
}
.form label {
  display: block;
  line-height: 18px;
}
.form .field {
  height: 32px;
  color: #999;
  font-size: 20px;
  line-height: 26px;
}
.form-row {
  margin-bottom: 17px;
}
.form-row:nth-child(2) .field {
  margin-top: 2px;
}
.form-row:nth-child(4) label {
  padding-top: 1px;
}
.form-btns {
  display: flex;
  justify-content: center;
  gap: 29px;
  padding: 7px 0 0 3px;
}
.short .form-btns {
  padding-top: 9px;
}
.save .wide-btn {
  height: 40px;
  margin: 26px 0 0 42px;
  padding-left: 6px;
  font-size: 15px;
  line-height: 38px;
}
.save-box {
  height: 177px;
  margin-top: 28px;
  padding: 11px 9px 0;
  border: 1px solid #ccc;
  background: #eee;
}
.save-box .field {
  margin-top: 4px;
}
.save-box .form-btns {
  padding-top: 21px;
}

/* marked areas */
.area {
  position: absolute;
  left: 0;
  width: 360px;
  font-size: 12px;
  letter-spacing: 0.1px;
  line-height: 16px;
}
.area svg {
  display: block;
  width: 360px;
  height: 100%;
  overflow: visible;
}
.area rect {
  stroke: rgba(255, 0, 0, 0.5);
  stroke-width: 2;
  stroke-dasharray: 10 4;
}
.area span {
  position: absolute;
}
.msg {
  top: 0;
  height: 81px;
  color: #fff;
}
.msg rect {
  fill: rgba(255, 0, 0, 0.35);
}
.msg .first {
  left: 3px;
  top: 1px;
}
.msg .last {
  right: 2px;
  bottom: 2px;
}
.keys {
  top: 389px;
  height: 251px;
  color: #f00;
}
.keys rect {
  fill: rgba(255, 255, 0, 0.45);
}
.keys .first {
  left: 2px;
  top: 0;
}
.keys .last {
  right: 1px;
  bottom: -2px;
}
.row2 .first {
  top: 1px;
}
.row2 .last {
  right: 3px;
  bottom: 3px;
}
.row3 {
  left: 1px;
}
</style>
